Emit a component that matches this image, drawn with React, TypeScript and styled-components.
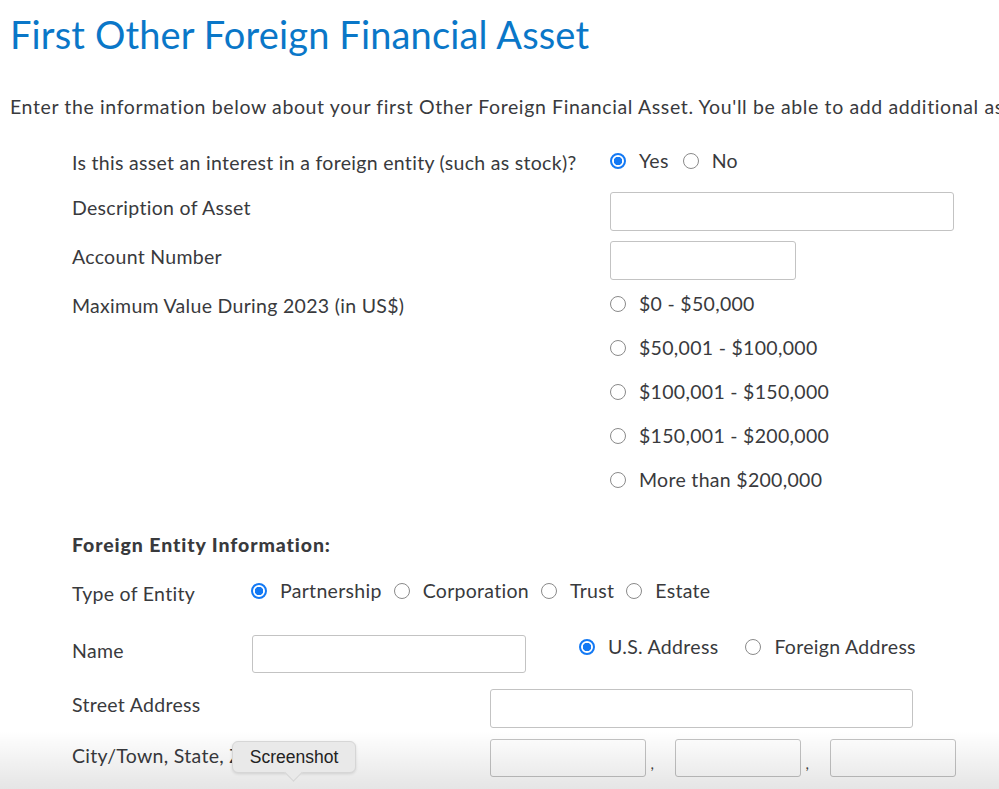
import { createGlobalStyle, styled } from "styled-components";

const GlobalStyle = createGlobalStyle`
  html, body {
    margin: 0;
    padding: 0;
    background: #ffffff;
    overflow: hidden;
  }
  body {
    font-family: Lato, "Noto Sans", sans-serif;
    color: #393a3d;
  }
`;

const Page = styled.div`
  width: 999px;
  height: 789px;
  overflow: hidden;
  position: relative;
  padding-left: 10px;
  box-sizing: border-box;
`;

const Title = styled.h1`
  margin: 0;
  padding-top: 11px;
  font-size: 38px;
  line-height: 46px;
  font-weight: 400;
  letter-spacing: 0.15px;
  color: #0a77c8;
  white-space: nowrap;
`;

const Intro = styled.p`
  margin: 38px 0 0;
  font-size: 19.5px;
  line-height: 24px;
  letter-spacing: 0.62px;
  white-space: nowrap;
  color: #393a3d;
`;

const Form = styled.div`
  padding-left: 62px;
  margin-top: 30px;
  display: flex;
  flex-direction: column;
`;

const Row = styled.div<{ $gap?: number; $height?: number }>`
  display: flex;
  align-items: flex-start;
  margin-top: ${(p) => p.$gap ?? 0}px;
  min-height: ${(p) => p.$height ?? 24}px;
`;

const Label = styled.div<{ $width: number; $offset?: number }>`
  width: ${(p) => p.$width}px;
  flex-shrink: 0;
  padding-top: ${(p) => p.$offset ?? 0}px;
  font-size: 19.5px;
  line-height: 24px;
  letter-spacing: 0.3px;
  white-space: nowrap;
`;

const Heading = styled.div`
  margin-top: 31px;
  font-size: 19.5px;
  line-height: 24px;
  letter-spacing: 0.9px;
  font-weight: 900;
  color: #393a3d;
`;

const Input = styled.div<{ $width: number; $height?: number }>`
  width: ${(p) => p.$width}px;
  height: ${(p) => p.$height ?? 39}px;
  box-sizing: border-box;
  border: 1px solid #c3c3c3;
  border-radius: 3px;
  background: #fff;
  flex-shrink: 0;
`;

const RadioGroup = styled.div<{ $gap: number; $indent?: number }>`
  display: flex;
  align-items: center;
  gap: ${(p) => p.$gap}px;
  height: 24px;
  margin-left: ${(p) => p.$indent ?? 0}px;
`;

const RadioList = styled.div`
  display: flex;
  flex-direction: column;
`;

const RadioItem = styled.div<{ $step?: number }>`
  display: flex;
  align-items: center;
  height: ${(p) => p.$step ?? 24}px;
`;

const Dot = styled.span<{ $on?: boolean }>`
  width: 16px;
  height: 16px;
  box-sizing: border-box;
  border-radius: 50%;
  border: ${(p) => (p.$on ? "2px solid #1379f4" : "1px solid #8a8a8a")};
  background: ${(p) =>
    p.$on ? "radial-gradient(circle, #1379f4 0 4px, #fff 4.5px)" : "#fff"};
  flex-shrink: 0;
  margin-right: 13px;
`;

const RadioText = styled.span`
  font-size: 19.5px;
  line-height: 24px;
  letter-spacing: 0.3px;
  white-space: nowrap;
`;

const Comma = styled.span`
  width: 29px;
  box-sizing: border-box;
  padding-left: 5px;
  font-size: 15px;
  padding-top: 15px;
  color: #444;
  font-style: italic;
`;

const Fade = styled.div`
  position: absolute;
  left: 0;
  right: 0;
  bottom: 0;
  height: 58px;
  background: linear-gradient(rgba(0, 0, 0, 0), rgba(0, 0, 0, 0.1));
  pointer-events: none;
`;

const Tooltip = styled.div`
  position: absolute;
  left: 232px;
  top: 741px;
  width: 124px;
  height: 32px;
  box-sizing: border-box;
  border-radius: 6px;
  background: #e9e9e9;
  border: 1px solid #d6d6d6;
  box-shadow: 0 1px 3px rgba(0, 0, 0, 0.12);
  font-family: "Liberation Sans", Arial, sans-serif;
  font-size: 17.5px;
  color: #222;
  display: flex;
  align-items: center;
  justify-content: center;

  &::after {
    content: "";
    position: absolute;
    left: 54px;
    bottom: -7px;
    width: 12px;
    height: 12px;
    background: #e9e9e9;
    border-right: 1px solid #d6d6d6;
    border-bottom: 1px solid #d6d6d6;
    transform: rotate(45deg);
  }
`;

const Radio = ({ on, label }: { on?: boolean; label: string }) => (
  <RadioItem>
    <Dot $on={on} />
    <RadioText>{label}</RadioText>
  </RadioItem>
);

const ranges = [
  "$0 - $50,000",
  "$50,001 - $100,000",
  "$100,001 - $150,000",
  "$150,001 - $200,000",
  "More than $200,000",
];

export default function App() {
  return (
    <Page>
      <GlobalStyle />
      <Title>First Other Foreign Financial Asset</Title>
      <Intro>
        Enter the information below about your first Other Foreign Financial
        Asset. You'll be able to add additional assets later.
      </Intro>
      <Form>
        <Row $gap={0}>
          <Label $width={538} $offset={2}>
            Is this asset an interest in a foreign entity (such as stock)?
          </Label>
          <RadioGroup $gap={14}>
            <Radio on label="Yes" />
            <Radio label="No" />
          </RadioGroup>
        </Row>
        <Row $gap={17}>
          <Label $width={538} $offset={4}>
            Description of Asset
          </Label>
          <Input $width={344} />
        </Row>
        <Row $gap={10}>
          <Label $width={538} $offset={4}>
            Account Number
          </Label>
          <Input $width={186} />
        </Row>
        <Row $gap={2}>
          <Label $width={538} $offset={12}>
            Maximum Value During 2023 (in US$)
          </Label>
          <RadioList>
            {ranges.map((r) => (
              <RadioItem key={r} $step={44}>
                <Dot />
                <RadioText>{r}</RadioText>
              </RadioItem>
            ))}
          </RadioList>
        </Row>

        <Heading>Foreign Entity Information:</Heading>

        <Row $gap={22}>
          <Label $width={179} $offset={3}>
            Type of Entity
          </Label>
          <RadioGroup $gap={12}>
            <Radio on label="Partnership" />
            <Radio label="Corporation" />
            <Radio label="Trust" />
            <Radio label="Estate" />
          </RadioGroup>
        </Row>
        <Row $gap={29}>
          <Label $width={180} $offset={4}>
            Name
          </Label>
          <Input $width={274} $height={38} />
          <RadioGroup $gap={27} $indent={53}>
            <Radio on label="U.S. Address" />
            <Radio label="Foreign Address" />
          </RadioGroup>
        </Row>
        <Row $gap={16}>
          <Label $width={418} $offset={4}>
            Street Address
          </Label>
          <Input $width={423} />
        </Row>
        <Row $gap={11}>
          <Label $width={418} $offset={5}>
            City/Town, State, ZIP Code
          </Label>
          <Input $width={156} $height={38} />
          <Comma>,</Comma>
          <Input $width={126} $height={38} />
          <Comma>,</Comma>
          <Input $width={126} $height={38} />
        </Row>
      </Form>
      <Fade />
      <Tooltip>Screenshot</Tooltip>
    </Page>
  );
}
